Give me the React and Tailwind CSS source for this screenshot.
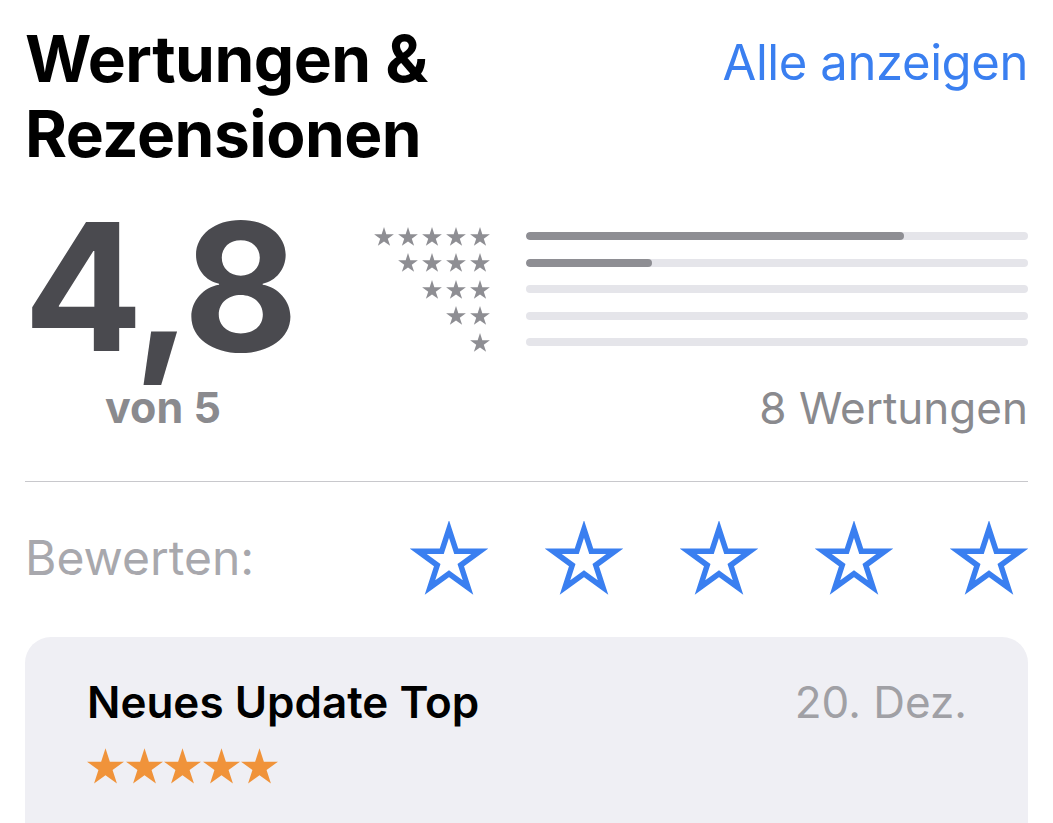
import React from 'react';

const STAR = 'M50 0L61.81 36.35L100 36.35L69.11 58.81L80.92 95.15L50 72.69L19.08 95.15L30.89 58.81L0 36.35L38.19 36.35Z';

function Star({ className }) {
  return (
    <svg viewBox="0 0 100 96" className={className}>
      <path d={STAR} fill="currentColor" />
    </svg>
  );
}

function OutlineStar() {
  return (
    <svg viewBox="-13 -13 126 122" className="w-[78px] h-[75px] text-[#3a7ff0]">
      <path d={STAR} fill="none" stroke="currentColor" strokeWidth="9" strokeLinejoin="miter" strokeMiterlimit="10" />
    </svg>
  );
}

const rows = [
  { stars: 5, fill: 75.3 },
  { stars: 4, fill: 25.1 },
  { stars: 3, fill: 0 },
  { stars: 2, fill: 0 },
  { stars: 1, fill: 0 },
];

export default function App() {
  return (
    <div className="w-[1053px] h-[823px] overflow-hidden bg-white px-[25px]" style={{ fontFamily: 'Inter, "Noto Sans", sans-serif' }}>
      {/* header */}
      <div className="flex justify-between items-start pt-[21px]">
        <h1 className="text-[64px] font-bold leading-[75px] tracking-[-0.5px] text-black">
          Wertungen &amp;<br />Rezensionen
        </h1>
        <span className="mt-[17px] text-[49px] leading-[49px] tracking-[-0.4px] text-[#3a7ff0]">Alle anzeigen</span>
      </div>

      {/* summary */}
      <div className="flex mt-[28px] h-[282px]">
        <div className="w-[276px] flex flex-col items-center">
          <div className="mt-[18px] text-[177px] leading-[140px] font-bold tracking-[-4px] text-[#4a4a4f] -ml-[8px]">4,8</div>
          <div className="mt-[29px] text-[43px] leading-[43px] font-bold text-[#8a8a8e]">von 5</div>
        </div>
        <div className="w-[189px] pt-[24px] flex flex-col">
          {rows.map((r) => (
            <div key={r.stars} className="h-[26.5px] flex items-center justify-end gap-[4px]">
              {Array.from({ length: r.stars }).map((_, i) => (
                <Star key={i} className="w-[20px] h-[19px] text-[#8e8e93]" />
              ))}
            </div>
          ))}
        </div>
        <div className="flex-1 ml-[36px] pt-[24px] flex flex-col">
          {rows.map((r) => (
            <div key={r.stars} className="h-[26.5px] flex items-center">
              <div className="w-full h-[8px] rounded-full bg-[#e5e5ea] overflow-hidden">
                <div className="h-full rounded-full bg-[#8e8e93]" style={{ width: `${r.fill}%` }} />
              </div>
            </div>
          ))}
          <div className="mt-[30px] text-right text-[44px] leading-[44px] text-[#8a8a8e]">8 Wertungen</div>
        </div>
      </div>

      <div className="border-t border-[#c8c8cc]" />

      {/* rate */}
      <div className="flex items-center mt-[38px] h-[76px]">
        <span className="text-[48px] leading-[48px] text-[#a8a8ad]">Bewerten:</span>
        <div className="ml-auto flex gap-[57px]">
          {[0, 1, 2, 3, 4].map((i) => (
            <OutlineStar key={i} />
          ))}
        </div>
      </div>

      {/* review card */}
      <div className="mt-[41px] h-[300px] rounded-[26px] bg-[#efeff4] pl-[62px] pr-[61px] pt-[43px]">
        <div className="flex justify-between">
          <span className="text-[44px] leading-[44px] font-semibold text-black">Neues Update Top</span>
          <span className="text-[44px] leading-[44px] text-[#a0a0a5]">20. Dez.</span>
        </div>
        <div className="mt-[24px] flex gap-[1.5px]">
          {[0, 1, 2, 3, 4].map((i) => (
            <Star key={i} className="w-[37px] h-[36px] text-[#f0933a]" />
          ))}
        </div>
      </div>
    </div>
  );
}
